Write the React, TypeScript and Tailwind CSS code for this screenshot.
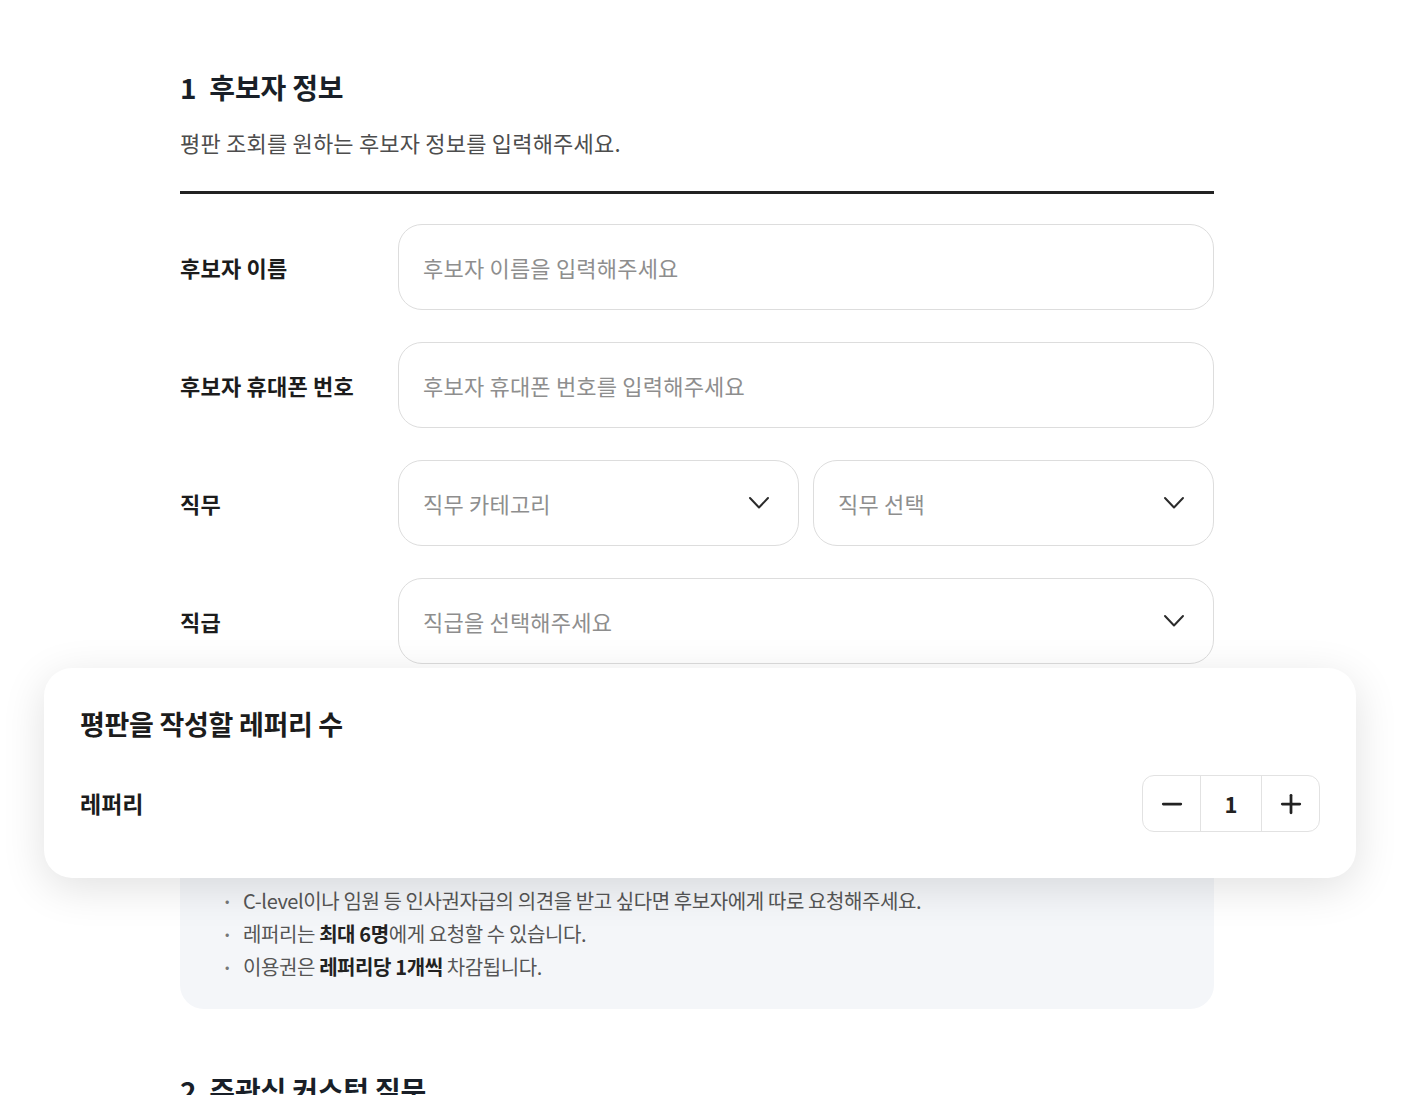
import { Minus, Plus } from "lucide-react"

const font = { fontFamily: '"Noto Sans CJK KR", "Noto Sans", sans-serif' }

function Chevron() {
  return (
    <svg width="22" height="14" viewBox="0 0 22 14" fill="none" className="shrink-0">
      <polyline points="2,2 11,11.5 20,2" stroke="#2b2b2b" strokeWidth="2" strokeLinecap="round" strokeLinejoin="round" />
    </svg>
  )
}

function Row({ label, children }: { label: string; children: React.ReactNode }) {
  return (
    <div className="flex items-center">
      <div className="w-[218px] shrink-0 text-[22px] font-bold tracking-[0.2px] text-[#1c1c1c]">{label}</div>
      <div className="flex flex-1 gap-[14px]">{children}</div>
    </div>
  )
}

function TextField({ placeholder }: { placeholder: string }) {
  return (
    <input
      placeholder={placeholder}
      className="h-[86px] w-full rounded-[24px] border border-[#dddddd] bg-white px-6 text-[22px] tracking-[0.2px] text-[#222] outline-none placeholder:text-[#8e8e8e]"
    />
  )
}

function SelectField({ placeholder }: { placeholder: string }) {
  return (
    <button className="flex h-[86px] flex-1 items-center justify-between rounded-[24px] border border-[#dddddd] bg-white pl-6 pr-[28px] text-left">
      <span className="text-[22px] tracking-[0.2px] text-[#8e8e8e]">{placeholder}</span>
      <Chevron />
    </button>
  )
}

const notices: React.ReactNode[] = [
  "평판은 후보자가 직접 지정한 레퍼리에게만 요청됩니다.",
  "레퍼리에게는 후보자의 이름과 직무, 직급 정보가 함께 전달됩니다.",
  "요청 후 레퍼리가 응답하지 않으면 이용권은 자동으로 복구됩니다.",
  "레퍼리가 작성한 평판은 후보자에게 공개되지 않습니다.",
  "레퍼리는 후보자와 함께 일한 경험이 있는 동료 또는 상사로 요청하는 것을 권장합니다.",
  "C-level이나 임원 등 인사권자급의 의견을 받고 싶다면 후보자에게 따로 요청해주세요.",
  <>
    레퍼리는 <b className="font-bold text-[#222]">최대 6명</b>에게 요청할 수 있습니다.
  </>,
  <>
    이용권은 <b className="font-bold text-[#222]">레퍼리당 1개씩</b> 차감됩니다.
  </>,
]

export default function App() {
  return (
    <div style={font} className="relative min-h-[1095px] overflow-hidden bg-white">
      <div className="ml-[180px] w-[1034px] pt-[68px] pb-20">
        {/* Section 1 */}
        <h2 className="flex items-center gap-[13px] text-[28px] font-bold leading-[38px] tracking-[-0.2px] text-[#191f28]">
          <span>1</span>
          <span>후보자 정보</span>
        </h2>
        <p className="mt-[21px] text-[22px] leading-[30px] tracking-[0.2px] text-[#4d4d4d]">
          평판 조회를 원하는 후보자 정보를 입력해주세요.
        </p>
        <div className="mt-[34px] h-[3px] bg-[#222]" />

        <div className="mt-[30px] flex flex-col gap-[32px]">
          <Row label="후보자 이름">
            <TextField placeholder="후보자 이름을 입력해주세요" />
          </Row>
          <Row label="후보자 휴대폰 번호">
            <TextField placeholder="후보자 휴대폰 번호를 입력해주세요" />
          </Row>
          <Row label="직무">
            <SelectField placeholder="직무 카테고리" />
            <SelectField placeholder="직무 선택" />
          </Row>
          <Row label="직급">
            <SelectField placeholder="직급을 선택해주세요" />
          </Row>
        </div>

        {/* Notice box */}
        <div className="mt-[32px] rounded-[24px] bg-[#f4f6f9] pl-[45px] pr-[40px] pt-[23px] pb-[26px]">
          <ul className="flex flex-col">
            {notices.map((n, i) => (
              <li key={i} className="flex items-center gap-[14px] text-[20px] leading-[33px] tracking-[-0.4px] text-[#555]">
                <span className="text-[13px] text-[#777]">•</span>
                <span>{n}</span>
              </li>
            ))}
          </ul>
        </div>

        {/* Section 2 */}
        <h2 className="mt-[62px] flex items-center gap-[13px] text-[28px] font-bold leading-[38px] tracking-[-0.2px] text-[#191f28]">
          <span>2</span>
          <span>주관식 커스텀 질문</span>
        </h2>
      </div>

      {/* Floating referee count card */}
      <div className="absolute left-[44px] top-[668px] w-[1312px] rounded-[28px] bg-white px-[36px] pt-[38px] pb-[46px] shadow-[0_10px_44px_rgba(0,0,0,0.12)]">
        <div className="text-[27px] font-semibold leading-[36px] tracking-[-0.3px] text-[#1c1c1c]">평판을 작성할 레퍼리 수</div>
        <div className="mt-[33px] flex items-center justify-between">
          <div className="text-[23px] font-semibold tracking-[0px] text-[#1c1c1c]">레퍼리</div>
          <div className="flex h-[57px] items-stretch overflow-hidden rounded-[12px] border border-[#e2e2e2]">
            <button className="flex w-[57px] items-center justify-center">
              <Minus size={30} strokeWidth={2.2} color="#222" />
            </button>
            <div className="flex w-[62px] items-center justify-center border-x border-[#e2e2e2] text-[22px] font-semibold text-[#222]">1</div>
            <button className="flex w-[57px] items-center justify-center">
              <Plus size={30} strokeWidth={2.2} color="#222" />
            </button>
          </div>
        </div>
      </div>
    </div>
  )
}
